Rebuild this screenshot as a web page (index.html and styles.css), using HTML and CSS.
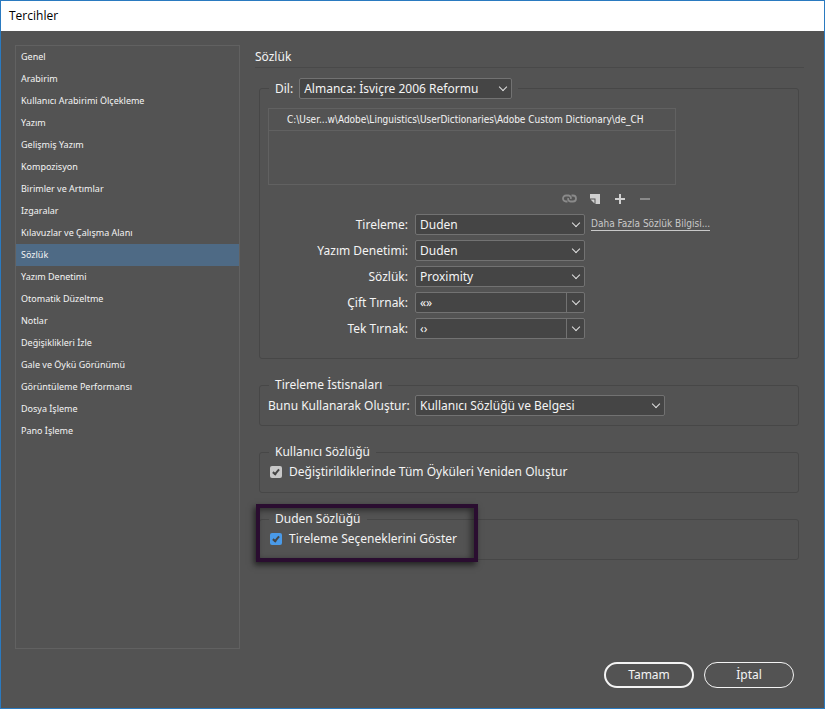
FILE: index.html
```html
<!DOCTYPE html>
<html lang="tr">
  <head>
    <meta charset="UTF-8" />
    <meta name="viewport" content="width=device-width, initial-scale=1.0" />
    <title>Tercihler</title>
    <link rel="stylesheet" href="styles.css">
  </head>
  <body>
    <header class="titlebar">Tercihler</header>

    <div class="content">
      <nav class="sidebar">
        <a href="#">Genel</a>
        <a href="#">Arabirim</a>
        <a href="#">Kullanıcı Arabirimi Ölçekleme</a>
        <a href="#">Yazım</a>
        <a href="#">Gelişmiş Yazım</a>
        <a href="#">Kompozisyon</a>
        <a href="#">Birimler ve Artımlar</a>
        <a href="#">Izgaralar</a>
        <a href="#">Kılavuzlar ve Çalışma Alanı</a>
        <a href="#" class="active">Sözlük</a>
        <a href="#">Yazım Denetimi</a>
        <a href="#">Otomatik Düzeltme</a>
        <a href="#">Notlar</a>
        <a href="#">Değişiklikleri İzle</a>
        <a href="#">Gale ve Öykü Görünümü</a>
        <a href="#">Görüntüleme Performansı</a>
        <a href="#">Dosya İşleme</a>
        <a href="#">Pano İşleme</a>
      </nav>

      <main class="panel">
        <h1>Sözlük</h1>

        <fieldset class="language">
          <legend>
            <label for="language">Dil:</label>
            <span class="select">
              <select id="language">
                <option>Almanca: İsviçre 2006 Reformu</option>
              </select>
            </span>
          </legend>

          <ul class="paths">
            <li>C:\User...w\Adobe\Linguistics\UserDictionaries\Adobe Custom Dictionary\de_CH</li>
          </ul>

          <div class="toolbar">
            <button type="button" class="disabled" aria-label="Yeniden bağla">
              <svg width="15" height="9" viewBox="0 0 15 9" fill="none" stroke="currentColor" stroke-width="1.8">
                <path d="M5.5 7.5H4A3 3 0 0 1 4 1.5H6.5A2.5 2.5 0 0 1 8.7 5" />
                <path d="M9.5 1.5H11A3 3 0 0 1 11 7.5H8.5A2.5 2.5 0 0 1 6.3 4" />
              </svg>
            </button>
            <button type="button" aria-label="Yeni sözlük">
              <svg width="10" height="10" viewBox="0 0 10 10" fill="currentColor">
                <path d="M0 0H10V10H5.5V4.5H0Z" />
                <path d="M0.5 5.5H4.5V9.5Z" />
              </svg>
            </button>
            <button type="button" aria-label="Ekle">
              <svg width="10" height="10" viewBox="0 0 10 10" fill="currentColor">
                <path d="M4 0H6V4H10V6H6V10H4V6H0V4H4Z" />
              </svg>
            </button>
            <button type="button" class="disabled" aria-label="Kaldır">
              <svg width="10" height="10" viewBox="0 0 10 10" fill="currentColor">
                <path d="M0 4H10V6H0Z" />
              </svg>
            </button>
          </div>

          <div class="row">
            <label for="hyphenation">Tireleme:</label>
            <span class="select">
              <select id="hyphenation">
                <option>Duden</option>
              </select>
            </span>
            <a href="#" class="more">Daha Fazla Sözlük Bilgisi...</a>
          </div>
          <div class="row">
            <label for="spelling">Yazım Denetimi:</label>
            <span class="select">
              <select id="spelling">
                <option>Duden</option>
              </select>
            </span>
          </div>
          <div class="row">
            <label for="dictionary">Sözlük:</label>
            <span class="select">
              <select id="dictionary">
                <option>Proximity</option>
              </select>
            </span>
          </div>
          <div class="row">
            <label for="double">Çift Tırnak:</label>
            <span class="select combo">
              <input type="text" id="double" value="«»" />
            </span>
          </div>
          <div class="row">
            <label for="single">Tek Tırnak:</label>
            <span class="select combo">
              <input type="text" id="single" value="‹›" />
            </span>
          </div>
        </fieldset>

        <fieldset>
          <legend>Tireleme İstisnaları</legend>
          <div class="row">
            <label for="compose">Bunu Kullanarak Oluştur:</label>
            <span class="select wide">
              <select id="compose">
                <option>Kullanıcı Sözlüğü ve Belgesi</option>
              </select>
            </span>
          </div>
        </fieldset>

        <fieldset>
          <legend>Kullanıcı Sözlüğü</legend>
          <label class="check">
            <input type="checkbox" checked />
            Değiştirildiklerinde Tüm Öyküleri Yeniden Oluştur
          </label>
        </fieldset>

        <fieldset class="duden">
          <legend>Duden Sözlüğü</legend>
          <label class="check">
            <input type="checkbox" class="blue" checked />
            Tireleme Seçeneklerini Göster
          </label>
          <div class="highlight"></div>
        </fieldset>
      </main>
    </div>

    <footer class="actions">
      <button type="button" class="primary">Tamam</button>
      <button type="button">İptal</button>
    </footer>
  </body>
</html>
```
FILE: styles.css
```css
* {
  box-sizing: border-box;
}
body {
  margin: 0;
  min-height: 100vh;
  display: flex;
  flex-direction: column;
  border: 1px solid #2a7ac0;
  background-color: #535353;
  color: #f4f4f4;
  font-family: "Noto Sans", sans-serif;
  font-size: 12px;
  line-height: 20px;
}
button,
input,
select {
  font: inherit;
  color: inherit;
}
.titlebar {
  height: 30px;
  padding: 0 8px;
  background-color: #fff;
  color: #000;
  font-family: "Open Sans", sans-serif;
  line-height: 30px;
}
.content {
  flex: 1;
  display: flex;
  gap: 15px;
  padding: 14px 20px 0 14px;
}
.sidebar {
  width: 225px;
  flex-shrink: 0;
  border: 1px solid #616161;
  font-size: 9px;
}
.sidebar a {
  display: block;
  height: 22px;
  padding: 0 5px;
  line-height: 22px;
  color: inherit;
  text-decoration: none;
}
.sidebar a.active {
  background-color: #4e6a85;
}
.panel {
  flex: 1;
  min-width: 0;
}
h1 {
  margin: 0 0 10px;
  height: 23px;
  border-bottom: 1px solid #494949;
  font-size: 12px;
  font-weight: normal;
  line-height: 24px;
}
fieldset {
  margin: 0 5px 16px 4px;
  min-width: 0;
  height: 51px;
  padding: 0 8px;
  border: 1px solid #474747;
  border-radius: 3px;
}
legend {
  padding: 0 6px;
  margin-left: 1px;
}
fieldset.language {
  height: auto;
  padding-bottom: 14px;
}
.language legend {
  display: flex;
  align-items: center;
  gap: 6px;
}
.select {
  position: relative;
  display: block;
  width: 170px;
  height: 21px;
}
.select select,
.select input {
  display: block;
  appearance: none;
  width: 100%;
  height: 100%;
  margin: 0;
  padding: 0 20px 0 4px;
  border: 1px solid #727272;
  border-radius: 2px;
  background-color: #454545;
}
.select::after {
  content: "";
  position: absolute;
  top: 6px;
  right: 6px;
  width: 5px;
  height: 5px;
  border: solid #e0e0e0;
  border-width: 0 1px 1px 0;
  transform: rotate(45deg);
  pointer-events: none;
}
.combo::before {
  content: "";
  position: absolute;
  top: 0;
  right: 18px;
  width: 1px;
  height: 100%;
  background-color: #727272;
}
legend .select {
  width: 213px;
}
.select.wide {
  width: 250px;
}
.paths {
  margin: 9px 0 4px;
  padding: 0;
  width: 408px;
  height: 77px;
  border: 1px solid #616161;
  list-style: none;
}
.paths li {
  height: 22px;
  padding-left: 18px;
  border-bottom: 1px solid #616161;
  line-height: 21px;
}
.paths li,
.more {
  font-family: "DejaVu Sans Condensed", sans-serif;
  font-size: 10px;
}
.toolbar {
  display: flex;
  justify-content: flex-end;
  width: 389px;
  margin-bottom: 6px;
}
.toolbar button {
  display: flex;
  align-items: center;
  justify-content: center;
  width: 25px;
  height: 19px;
  padding: 0;
  border: 0;
  background: none;
  color: #d0d0d0;
}
.toolbar .disabled {
  color: #8a8a8a;
}
.row {
  display: flex;
  align-items: center;
  margin-bottom: 5px;
}
.row label {
  width: 140px;
  margin-right: 7px;
  text-align: right;
  white-space: nowrap;
}
.more {
  margin-left: 6px;
  border-bottom: 1px solid #c8c8c8;
  color: #c8c8c8;
  line-height: 12px;
  text-decoration: none;
}
.check {
  display: flex;
  align-items: center;
  gap: 7px;
  padding-left: 2px;
}
.check input {
  position: relative;
  appearance: none;
  width: 12px;
  height: 12px;
  margin: 0;
  border-radius: 2px;
  background-color: #c8c8c8;
}
.check input:checked::after {
  content: "";
  position: absolute;
  top: 2px;
  left: 4px;
  width: 2px;
  height: 5px;
  border: solid #454545;
  border-width: 0 2px 2px 0;
  transform: rotate(40deg);
}
.check input.blue {
  background-color: #4a9ae8;
}
.duden {
  position: relative;
  margin-bottom: 0;
}
/* frame drawn over the last group */
.highlight {
  position: absolute;
  top: -25px;
  left: -4px;
  width: 222px;
  height: 58px;
  border: 4px solid #2a0d30;
  box-shadow: -2px 3px 6px rgba(0, 0, 0, 0.6), inset -3px 2px 6px rgba(0, 0, 0, 0.5);
  pointer-events: none;
}
.actions {
  display: flex;
  justify-content: flex-end;
  gap: 10px;
  padding: 13px 30px 20px;
}
.actions button {
  width: 90px;
  height: 26px;
  padding: 0;
  border: 1px solid #f4f4f4;
  border-radius: 13px;
  background: none;
}
.actions .primary {
  border-width: 2px;
}
```
